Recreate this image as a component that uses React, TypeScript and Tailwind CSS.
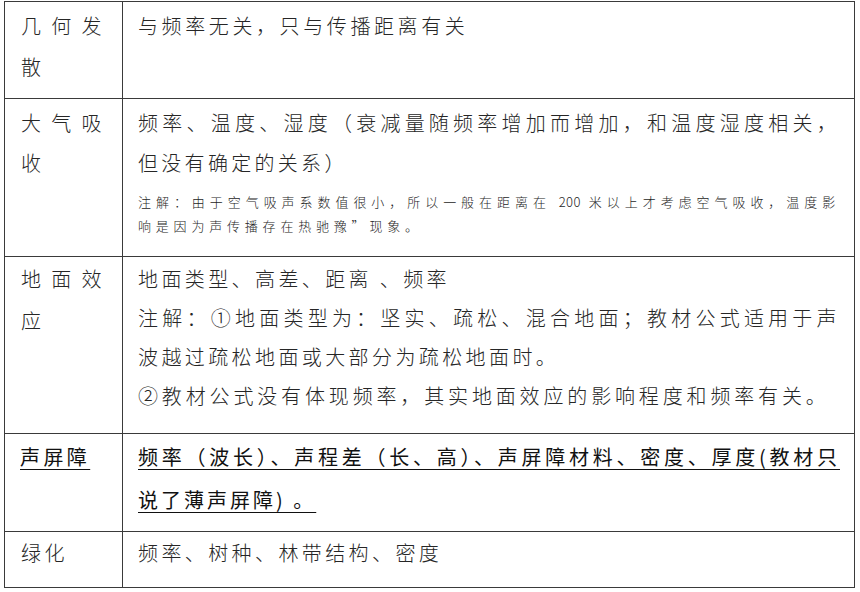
export default function App() {
  const full = "whitespace-nowrap text-justify [text-align-last:justify]"
  return (
    <div className="w-[860px] h-[592px] bg-white pt-[1px] pl-[4px] font-['Noto_Sans_CJK_SC',sans-serif] font-light text-[#262626]">
      <div className="w-[851px] border border-[#3a3a3a]">
        {/* 几何发散 */}
        <div className="flex h-[96px]">
          <div className="w-[118px] shrink-0 border-r border-[#3a3a3a] pl-[16px] pr-[17px] pt-[3px] text-[20px] leading-[41px] tracking-[3.4px] text-justify">
            几何发散
          </div>
          <div className="flex-1 pl-[15px] pr-[14px] pt-[3px] text-[20px] leading-[41px] tracking-[3.6px]">
            与频率无关，只与传播距离有关
          </div>
        </div>

        {/* 大气吸收 */}
        <div className="flex h-[158px] border-t border-[#3a3a3a]">
          <div className="w-[118px] shrink-0 border-r border-[#3a3a3a] pl-[16px] pr-[17px] pt-[4px] text-[20px] leading-[40px] tracking-[3.4px] text-justify">
            大气吸收
          </div>
          <div className="flex-1 pl-[15px] pr-[14px] pt-[4px]">
            <div className="text-[20px] leading-[40px] tracking-[3.3px]">
              <div className={full}>频率、温度、湿度（衰减量随频率增加而增加，和温度湿度相关，</div>
              <div>但没有确定的关系）</div>
            </div>
            <div className="mt-[7px] text-[13px] leading-[24px] tracking-[4.8px]">
              <div className={full}>
                注解：由于空气吸声系数值很小，所以一般在距离在 <span className="tracking-[0.5px]">200</span> 米以上才考虑空气吸收，温度影
              </div>
              <div>响是因为声传播存在热驰豫”现象。</div>
            </div>
          </div>
        </div>

        {/* 地面效应 */}
        <div className="flex h-[177px] border-t border-[#3a3a3a]">
          <div className="w-[118px] shrink-0 border-r border-[#3a3a3a] pl-[16px] pr-[17px] pt-[1px] text-[20px] leading-[42px] tracking-[3.4px] text-justify">
            地面效应
          </div>
          <div className="flex-1 pl-[15px] pr-[14px] pt-[2px] text-[20px] leading-[39px] tracking-[3.4px]">
            <div>地面类型、高差、距离 、频率</div>
            <div className={full}>注解：①地面类型为：坚实、疏松、混合地面；教材公式适用于声</div>
            <div>波越过疏松地面或大部分为疏松地面时。</div>
            <div className="whitespace-nowrap tracking-[3.85px]">②教材公式没有体现频率，其实地面效应的影响程度和频率有关。</div>
          </div>
        </div>

        {/* 声屏障 */}
        <div className="flex h-[98px] border-t border-[#3a3a3a] font-normal text-[#111]">
          <div className="w-[118px] shrink-0 border-r border-[#3a3a3a] pl-[15px] pt-[1px] text-[20px] leading-[43px] tracking-[3.4px]">
            <span className="underline decoration-1 underline-offset-[4px]">声屏障</span>
          </div>
          <div className="flex-1 pl-[15px] pr-[14px] pt-[1px] text-[20px] leading-[43px] tracking-[3px]">
            <div className={full}>
              <span className="underline decoration-1 underline-offset-[4px]">频率（波长）、声程差（长、高）、声屏障材料、密度、厚度(教材只</span>
            </div>
            <div>
              <span className="underline decoration-1 underline-offset-[4px]">说了薄声屏障) 。</span>
            </div>
          </div>
        </div>

        {/* 绿化 */}
        <div className="flex h-[56px] border-t border-[#3a3a3a]">
          <div className="w-[118px] shrink-0 border-r border-[#3a3a3a] pl-[16px] pt-[1px] text-[20px] leading-[40px] tracking-[3.4px]">
            绿化
          </div>
          <div className="flex-1 pl-[15px] pr-[14px] pt-[1px] text-[20px] leading-[40px] tracking-[3.4px]">
            频率、树种、林带结构、密度
          </div>
        </div>
      </div>
    </div>
  )
}
